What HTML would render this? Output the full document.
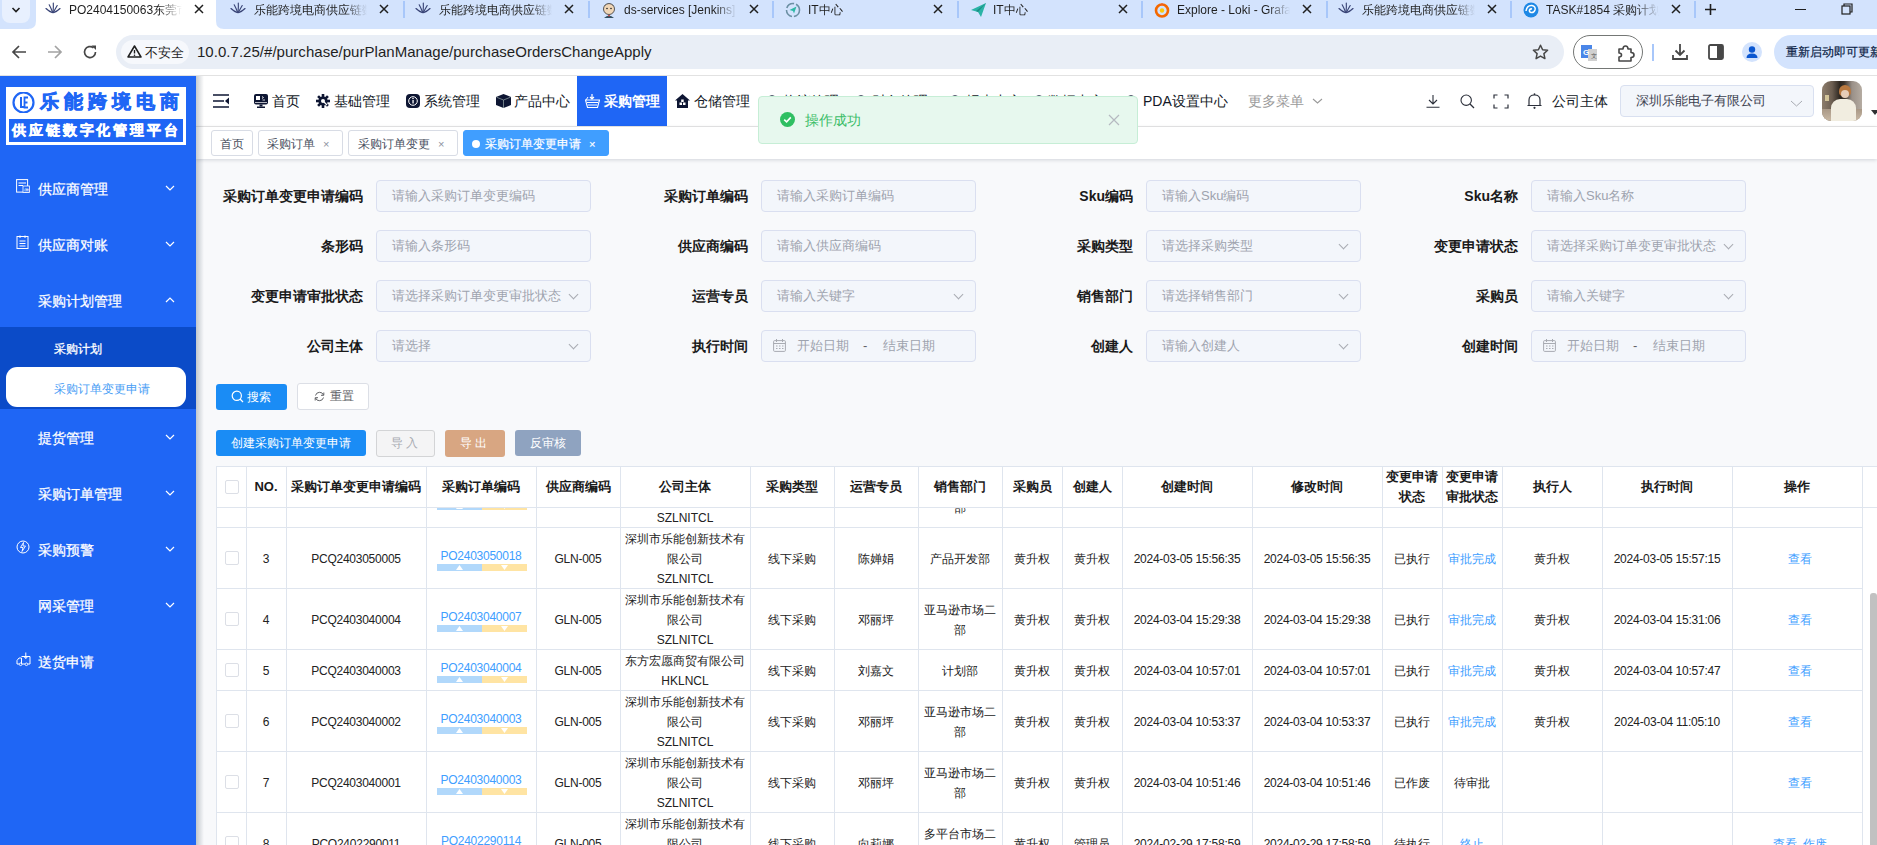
<!DOCTYPE html><html><head><meta charset="utf-8"><style>
*{box-sizing:border-box;margin:0;padding:0}
html,body{width:1877px;height:845px;overflow:hidden;background:#fff;font-family:"Liberation Sans",sans-serif;color:#303133}
.abs{position:absolute}
#tabs{position:absolute;left:0;top:0;width:1877px;height:29px;background:#d3e3fd}
.tab{position:absolute;top:0;height:29px;font-size:12px;color:#1f1f1f;white-space:nowrap}
.tab .t{position:absolute;top:3px;overflow:hidden;width:113px;height:16px;line-height:15px}
.tab .x{position:absolute;top:6px;font-size:14px;line-height:16px;color:#1f1f1f}
.sep{position:absolute;top:1px;width:2px;height:17px;background:#a8c7fa}
#toolbar{position:absolute;left:0;top:29px;width:1877px;height:47px;background:#fff;border-bottom:1px solid #e2e2e2}
#omni{position:absolute;left:116px;top:6px;width:1448px;height:34px;border-radius:17px;background:#e9eef6}
#page{position:absolute;left:0;top:76px;width:1877px;height:769px;background:#f8f9fb;overflow:hidden}
#side{position:absolute;left:0;top:0;width:196px;height:769px;background:#1f66f5;z-index:3}
#sideshadow{position:absolute;left:196px;top:0;width:8px;height:769px;background:linear-gradient(to right,rgba(0,21,41,.22),rgba(0,21,41,0));z-index:2}
.mi{position:absolute;left:0;width:196px;height:56px;color:#fff;font-size:14px;font-weight:bold}
.mi .l{position:absolute;left:38px;top:18px;line-height:20px}
.mi .ch{position:absolute;left:164px;top:24px;width:8px;height:8px;border-right:1.3px solid #fff;border-bottom:1.3px solid #fff;transform:rotate(45deg) scale(.75)}
#hdr{position:absolute;left:196px;top:0;width:1681px;height:51px;background:#fff;border-bottom:1px solid #e8e8e8}
.nav{position:absolute;top:0;height:50px;font-size:14px;color:#1b1b1b;line-height:50px;white-space:nowrap}
#tagsbar{position:absolute;left:196px;top:51px;width:1681px;height:32px;background:#fff;box-shadow:0 1px 4px rgba(0,21,41,.16)}
.tag{position:absolute;top:3px;height:26px;border:1px solid #d8dce5;border-radius:3px;font-size:12px;line-height:27px;color:#495060;background:#fff;white-space:nowrap}
.lbl{position:absolute;font-size:14px;font-weight:bold;color:#1a1a1a;text-align:right;line-height:32px;white-space:nowrap}
.inp{position:absolute;width:215px;height:32px;background:#f3f6fb;border:1px solid #dadff0;border-radius:4px;font-size:13px;color:#9ea3ae;line-height:30px;padding-left:15px;white-space:nowrap;overflow:hidden}
.inp .dd{position:absolute;right:13px;top:10px;width:7px;height:7px;border-right:1px solid #a8abb2;border-bottom:1px solid #a8abb2;transform:rotate(45deg)}
.btn{position:absolute;height:25px;border-radius:3px;font-size:12px;line-height:25px;text-align:center;white-space:nowrap}
#tbl{position:absolute;left:216px;top:390px;width:1647px;height:379px;overflow:hidden;background:#fff}
.hl{position:absolute;background:#e2e8f0}
.cell{position:absolute;text-align:center;font-size:12px;color:#222;line-height:20px;white-space:nowrap}
.hc{position:absolute;text-align:center;font-size:13px;font-weight:bold;color:#1a1a1a;line-height:20px;white-space:nowrap}
.lnk{color:#409eff}
.cb{position:absolute;width:14px;height:14px;border:1px solid #dcdfe6;border-radius:2px;background:#fff}
</style></head><body>
<div id="tabs">
<div class="abs" style="left:2px;top:0;width:28px;height:23px;background:#e8f0fe;border-radius:0 0 8px 8px"></div>
<svg class="abs" style="left:11px;top:6px" width="10" height="8" viewBox="0 0 10 8"><path d="M1.5 2 L5 5.5 L8.5 2" stroke="#1f1f1f" stroke-width="1.6" fill="none"/></svg>
<svg class="abs" style="left:28px;top:0" width="196" height="29" viewBox="0 0 196 29"><path d="M0 29 Q8 29 8 21 L8 0 L188 0 L188 21 Q188 29 196 29 Z" fill="#fff"/></svg>
<div class="tab" style="left:28px;width:185px">
<div class="abs" style="left:17px;top:2px;line-height:0"><svg width="16" height="12" viewBox="0 0 16 12"><g stroke="#3b4678" stroke-width="1.15" fill="none" stroke-linecap="round"><path d="M8 10.5 Q8.6 5 8.3 1"/><path d="M7.6 10.3 Q6 6 4.2 2.8"/><path d="M8.4 10.3 Q10.5 6.5 12.2 3.5"/><path d="M7.5 10.6 Q4 9.5 1 6.5"/><path d="M8.5 10.6 Q12 9.5 15 6.5"/></g></svg></div>
<div class="t" style="left:41px;-webkit-mask-image:linear-gradient(to right,#000 80%,transparent)">PO2404150063东莞市</div>
<svg class="abs" style="left:166px;top:4px" width="10" height="10" viewBox="0 0 10 10"><path d="M1 1 L9 9 M9 1 L1 9" stroke="#1f1f1f" stroke-width="1.5"/></svg>
</div>
<div class="tab" style="left:213px;width:185px">
<div class="abs" style="left:17px;top:2px;line-height:0"><svg width="16" height="12" viewBox="0 0 16 12"><g stroke="#3b4678" stroke-width="1.15" fill="none" stroke-linecap="round"><path d="M8 10.5 Q8.6 5 8.3 1"/><path d="M7.6 10.3 Q6 6 4.2 2.8"/><path d="M8.4 10.3 Q10.5 6.5 12.2 3.5"/><path d="M7.5 10.6 Q4 9.5 1 6.5"/><path d="M8.5 10.6 Q12 9.5 15 6.5"/></g></svg></div>
<div class="t" style="left:41px;-webkit-mask-image:linear-gradient(to right,#000 80%,transparent)">乐能跨境电商供应链数</div>
<svg class="abs" style="left:166px;top:4px" width="10" height="10" viewBox="0 0 10 10"><path d="M1 1 L9 9 M9 1 L1 9" stroke="#1f1f1f" stroke-width="1.5"/></svg>
</div>
<div class="tab" style="left:398px;width:185px">
<div class="abs" style="left:17px;top:2px;line-height:0"><svg width="16" height="12" viewBox="0 0 16 12"><g stroke="#3b4678" stroke-width="1.15" fill="none" stroke-linecap="round"><path d="M8 10.5 Q8.6 5 8.3 1"/><path d="M7.6 10.3 Q6 6 4.2 2.8"/><path d="M8.4 10.3 Q10.5 6.5 12.2 3.5"/><path d="M7.5 10.6 Q4 9.5 1 6.5"/><path d="M8.5 10.6 Q12 9.5 15 6.5"/></g></svg></div>
<div class="t" style="left:41px;-webkit-mask-image:linear-gradient(to right,#000 80%,transparent)">乐能跨境电商供应链数</div>
<svg class="abs" style="left:166px;top:4px" width="10" height="10" viewBox="0 0 10 10"><path d="M1 1 L9 9 M9 1 L1 9" stroke="#1f1f1f" stroke-width="1.5"/></svg>
</div>
<div class="tab" style="left:583px;width:185px">
<div class="abs" style="left:18px;top:2px;line-height:0"><svg width="16" height="16" viewBox="0 0 16 16"><circle cx="8" cy="7" r="5.5" fill="#f0d6b7" stroke="#333" stroke-width=".8"/><path d="M3 4 Q8 0 13 4 L12 3 Q8 1 4 3Z" fill="#333"/><circle cx="6" cy="6.5" r=".8" fill="#222"/><circle cx="10" cy="6.5" r=".8" fill="#222"/><path d="M3 16 Q8 11 13 16Z" fill="#335061"/><path d="M7 13 L9 13 L8 15Z" fill="#d33833"/></svg></div>
<div class="t" style="left:41px;-webkit-mask-image:linear-gradient(to right,#000 80%,transparent)">ds-services [Jenkins]</div>
<svg class="abs" style="left:166px;top:4px" width="10" height="10" viewBox="0 0 10 10"><path d="M1 1 L9 9 M9 1 L1 9" stroke="#1f1f1f" stroke-width="1.5"/></svg>
</div>
<div class="tab" style="left:767px;width:185px">
<div class="abs" style="left:18px;top:2px;line-height:0"><svg width="16" height="16" viewBox="0 0 16 16"><circle cx="8" cy="8" r="6.5" fill="none" stroke="#6b8fa3" stroke-width="1.6" stroke-dasharray="9 2"/><path d="M4.5 8 L11.5 4.5 L9 11.5 L8 9 Z" fill="#2eb8a6"/></svg></div>
<div class="t" style="left:41px;-webkit-mask-image:linear-gradient(to right,#000 80%,transparent)">IT中心</div>
<svg class="abs" style="left:166px;top:4px" width="10" height="10" viewBox="0 0 10 10"><path d="M1 1 L9 9 M9 1 L1 9" stroke="#1f1f1f" stroke-width="1.5"/></svg>
</div>
<div class="tab" style="left:952px;width:185px">
<div class="abs" style="left:18px;top:2px;line-height:0"><svg width="17" height="16" viewBox="0 0 17 16"><path d="M1 8 L16 1 L11 15 L8 10 Z" fill="#2ab3a6"/><path d="M8 10 L16 1 L6 9Z" fill="#1d8f85"/></svg></div>
<div class="t" style="left:41px;-webkit-mask-image:linear-gradient(to right,#000 80%,transparent)">IT中心</div>
<svg class="abs" style="left:166px;top:4px" width="10" height="10" viewBox="0 0 10 10"><path d="M1 1 L9 9 M9 1 L1 9" stroke="#1f1f1f" stroke-width="1.5"/></svg>
</div>
<div class="tab" style="left:1136px;width:185px">
<div class="abs" style="left:18px;top:2px;line-height:0"><svg width="16" height="16" viewBox="0 0 16 16"><circle cx="8" cy="8.5" r="6" fill="none" stroke="#f46800" stroke-width="2.6"/><circle cx="8" cy="8.5" r="2.2" fill="#fbca0a"/><path d="M8 1 L9.5 3 L6.5 3Z" fill="#f05a28"/></svg></div>
<div class="t" style="left:41px;-webkit-mask-image:linear-gradient(to right,#000 80%,transparent)">Explore - Loki - Grafana</div>
<svg class="abs" style="left:166px;top:4px" width="10" height="10" viewBox="0 0 10 10"><path d="M1 1 L9 9 M9 1 L1 9" stroke="#1f1f1f" stroke-width="1.5"/></svg>
</div>
<div class="tab" style="left:1321px;width:185px">
<div class="abs" style="left:17px;top:2px;line-height:0"><svg width="16" height="12" viewBox="0 0 16 12"><g stroke="#3b4678" stroke-width="1.15" fill="none" stroke-linecap="round"><path d="M8 10.5 Q8.6 5 8.3 1"/><path d="M7.6 10.3 Q6 6 4.2 2.8"/><path d="M8.4 10.3 Q10.5 6.5 12.2 3.5"/><path d="M7.5 10.6 Q4 9.5 1 6.5"/><path d="M8.5 10.6 Q12 9.5 15 6.5"/></g></svg></div>
<div class="t" style="left:41px;-webkit-mask-image:linear-gradient(to right,#000 80%,transparent)">乐能跨境电商供应链数</div>
<svg class="abs" style="left:166px;top:4px" width="10" height="10" viewBox="0 0 10 10"><path d="M1 1 L9 9 M9 1 L1 9" stroke="#1f1f1f" stroke-width="1.5"/></svg>
</div>
<div class="tab" style="left:1505px;width:185px">
<div class="abs" style="left:18px;top:2px;line-height:0"><svg width="16" height="16" viewBox="0 0 16 16"><circle cx="8" cy="8" r="7.5" fill="#1e88e5"/><path d="M3 9 Q4 3 9 3.5 Q13 4.5 12 8 Q11 11 8 10.5 Q6 10 6.5 8 Q7 6.5 9 7" stroke="#fff" stroke-width="1.5" fill="none"/></svg></div>
<div class="t" style="left:41px;-webkit-mask-image:linear-gradient(to right,#000 80%,transparent)">TASK#1854 采购计划</div>
<svg class="abs" style="left:166px;top:4px" width="10" height="10" viewBox="0 0 10 10"><path d="M1 1 L9 9 M9 1 L1 9" stroke="#1f1f1f" stroke-width="1.5"/></svg>
</div>
<div class="sep" style="left:403px"></div>
<div class="sep" style="left:588px"></div>
<div class="sep" style="left:772px"></div>
<div class="sep" style="left:957px"></div>
<div class="sep" style="left:1141px"></div>
<div class="sep" style="left:1326px"></div>
<div class="sep" style="left:1510px"></div>
<div class="sep" style="left:1694px"></div>
<svg class="abs" style="left:1704px;top:3px" width="13" height="13" viewBox="0 0 13 13"><path d="M6.5 1 V12 M1 6.5 H12" stroke="#1f1f1f" stroke-width="1.6"/></svg>
<div class="abs" style="left:1795px;top:9px;width:11px;height:1.2px;background:#1f1f1f"></div>
<svg class="abs" style="left:1841px;top:3px" width="12" height="12" viewBox="0 0 12 12"><rect x="1" y="3" width="8" height="8" fill="none" stroke="#1f1f1f" stroke-width="1.2"/><path d="M3 3 V1 H11 V9 H9" fill="none" stroke="#1f1f1f" stroke-width="1.2"/></svg>
</div>
<div id="toolbar">
<svg class="abs" style="left:11px;top:15px" width="16" height="16" viewBox="0 0 16 16"><path d="M15 8 H2 M8 2 L2 8 L8 14" stroke="#474747" stroke-width="1.7" fill="none"/></svg>
<svg class="abs" style="left:47px;top:15px" width="16" height="16" viewBox="0 0 16 16"><path d="M1 8 H14 M8 2 L14 8 L8 14" stroke="#a3a3a3" stroke-width="1.7" fill="none"/></svg>
<svg class="abs" style="left:82px;top:15px" width="16" height="16" viewBox="0 0 16 16"><path d="M13.5 8 A5.5 5.5 0 1 1 11.5 3.8" stroke="#474747" stroke-width="1.7" fill="none"/><path d="M9.5 1.5 H14 V6 Z" fill="#474747"/></svg>
<div id="omni">
<div class="abs" style="left:5px;top:5px;width:68px;height:24px;border-radius:12px;background:#f6f8fc"></div>
<svg class="abs" style="left:11px;top:10px" width="15" height="13" viewBox="0 0 15 13"><path d="M7.5 1 L14 12 H1 Z" fill="none" stroke="#1f1f1f" stroke-width="1.5" stroke-linejoin="round"/><path d="M7.5 5 V8.5" stroke="#1f1f1f" stroke-width="1.4"/><circle cx="7.5" cy="10.2" r=".8" fill="#1f1f1f"/></svg>
<div class="abs" style="left:29px;top:10px;font-size:13px;line-height:16px;color:#1f1f1f">不安全</div>
<div class="abs" style="left:81px;top:7px;font-size:15px;line-height:19px;color:#1f1f1f;letter-spacing:0.03px">10.0.7.25/#/purchase/purPlanManage/purchaseOrdersChangeApply</div>
<svg class="abs" style="left:1416px;top:9px" width="17" height="16" viewBox="0 0 17 16"><path d="M8.5 1.2 L10.6 5.8 L15.6 6.3 L11.9 9.6 L12.9 14.6 L8.5 12.1 L4.1 14.6 L5.1 9.6 L1.4 6.3 L6.4 5.8 Z" fill="none" stroke="#474747" stroke-width="1.5" stroke-linejoin="round"/></svg>
</div>
<div class="abs" style="left:1573px;top:6px;width:70px;height:34px;border:1px solid #747775;border-radius:17px"></div>
<svg class="abs" style="left:1581px;top:16px" width="17" height="17" viewBox="0 0 17 17"><rect x="0" y="0" width="11" height="13" fill="#4a86e8"/><rect x="7" y="4" width="9" height="12" fill="#d0d0d0"/><text x="2" y="10" font-size="8" fill="#fff" font-family="Liberation Sans" font-weight="bold">G</text><text x="10" y="13" font-size="6" fill="#555" font-family="Liberation Sans">文</text></svg>
<svg class="abs" style="left:1617px;top:16px" width="18" height="17" viewBox="0 0 18 17"><path d="M2 4 H6 Q6 1 8.5 1 Q11 1 11 4 H14 V7.5 Q17 7.5 17 10 Q17 12.5 14 12.5 V16 H2 V12 Q4.5 12 4.5 10 Q4.5 8 2 8 Z" fill="none" stroke="#474747" stroke-width="1.6" stroke-linejoin="round"/></svg>
<div class="abs" style="left:1652px;top:15px;width:2px;height:17px;background:#a8c7fa"></div>
<svg class="abs" style="left:1671px;top:14px" width="18" height="18" viewBox="0 0 18 18"><path d="M9 1 V12 M4.5 7.5 L9 12 L13.5 7.5 M2 12 V16 H16 V12" stroke="#474747" stroke-width="1.8" fill="none"/></svg>
<svg class="abs" style="left:1708px;top:15px" width="16" height="16" viewBox="0 0 16 16"><rect x="1" y="1" width="14" height="14" rx="1.5" fill="none" stroke="#474747" stroke-width="1.8"/><rect x="9" y="1" width="6" height="14" fill="#474747"/></svg>
<div class="abs" style="left:1742px;top:13px;width:20px;height:20px;border-radius:10px;background:#d3e3fd"></div>
<svg class="abs" style="left:1744px;top:15px" width="16" height="16" viewBox="0 0 16 16"><circle cx="8" cy="5.5" r="3.2" fill="#0b57d0"/><path d="M2.5 14 Q2.5 9.5 8 9.5 Q13.5 9.5 13.5 14 Z" fill="#0b57d0"/></svg>
<div class="abs" style="left:1774px;top:6px;width:120px;height:34px;border-radius:17px;background:#d3e3fd"></div>
<div class="abs" style="left:1786px;top:15.5px;font-size:12px;line-height:14px;color:#0b1d45;-webkit-text-stroke:.2px #0b1d45;white-space:nowrap">重新启动即可更新</div>
</div>
<div id="page">
<div id="side">
<div class="abs" style="left:6px;top:11px;width:180px;height:58px;background:#fff"></div>
<div class="abs" style="left:9px;top:42.5px;width:174px;height:23.5px;background:#1f66f5"></div>
<svg class="abs" style="left:12px;top:16px" width="24" height="21" viewBox="0 0 24 21"><circle cx="11.5" cy="10.5" r="10" fill="none" stroke="#1f66f5" stroke-width="2.2"/><path d="M9 5 V15 H12" stroke="#1f66f5" stroke-width="2" fill="none"/><path d="M16 5.5 H12.5 V15.5 H16 M12.5 10.5 H15.5" stroke="#1f66f5" stroke-width="1.8" fill="none"/></svg>
<div class="abs" style="left:40px;top:15px;font-size:19px;line-height:22px;font-weight:bold;color:#1f66f5;letter-spacing:5.1px;-webkit-text-stroke:.7px #1f66f5;white-space:nowrap">乐能跨境电商</div>
<div class="abs" style="left:12px;top:46px;font-size:14px;line-height:17px;font-weight:bold;color:#fff;letter-spacing:2.9px;-webkit-text-stroke:.5px #fff;white-space:nowrap">供应链数字化管理平台</div>
<div class="abs" style="left:38px;top:102.5px;font-size:14px;line-height:20px;color:#fff;-webkit-text-stroke:.25px #fff;white-space:nowrap">供应商管理</div>
<svg class="abs" style="left:165px;top:109px" width="10" height="6" viewBox="0 0 10 6"><path d="M1 1 L5 5 L9 1" stroke="#fff" stroke-width="1.2" fill="none"/></svg>
<div class="abs" style="left:16px;top:103px;line-height:0"><svg width="14" height="14" viewBox="0 0 14 14"><rect x=".6" y=".6" width="11" height="12.5" fill="none" stroke="#fff" stroke-width="1"/><path d="M2.5 4 H10 M2.5 6.5 H7" stroke="#fff" stroke-width="1"/><rect x="7" y="7" width="6.5" height="6.5" fill="#1f66f5" stroke="#fff" stroke-width=".8"/><text x="8" y="12.5" font-size="5" fill="#fff">供</text></svg></div>
<div class="abs" style="left:38px;top:158.5px;font-size:14px;line-height:20px;color:#fff;-webkit-text-stroke:.25px #fff;white-space:nowrap">供应商对账</div>
<svg class="abs" style="left:165px;top:165px" width="10" height="6" viewBox="0 0 10 6"><path d="M1 1 L5 5 L9 1" stroke="#fff" stroke-width="1.2" fill="none"/></svg>
<div class="abs" style="left:16px;top:159px;line-height:0"><svg width="14" height="14" viewBox="0 0 14 14"><rect x="1" y="1.5" width="11" height="12" fill="none" stroke="#fff" stroke-width="1"/><path d="M4 .5 V3 M9 .5 V3 M3.5 6 H9.5 M3.5 8.5 H9.5 M3.5 11 H9.5" stroke="#fff" stroke-width="1"/></svg></div>
<div class="abs" style="left:38px;top:214.5px;font-size:14px;line-height:20px;color:#fff;-webkit-text-stroke:.25px #fff;white-space:nowrap">采购计划管理</div>
<svg class="abs" style="left:165px;top:221px" width="10" height="6" viewBox="0 0 10 6"><path d="M1 5 L5 1 L9 5" stroke="#fff" stroke-width="1.2" fill="none"/></svg>
<div class="abs" style="left:38px;top:351.5px;font-size:14px;line-height:20px;color:#fff;-webkit-text-stroke:.25px #fff;white-space:nowrap">提货管理</div>
<svg class="abs" style="left:165px;top:358px" width="10" height="6" viewBox="0 0 10 6"><path d="M1 1 L5 5 L9 1" stroke="#fff" stroke-width="1.2" fill="none"/></svg>
<div class="abs" style="left:38px;top:407.5px;font-size:14px;line-height:20px;color:#fff;-webkit-text-stroke:.25px #fff;white-space:nowrap">采购订单管理</div>
<svg class="abs" style="left:165px;top:414px" width="10" height="6" viewBox="0 0 10 6"><path d="M1 1 L5 5 L9 1" stroke="#fff" stroke-width="1.2" fill="none"/></svg>
<div class="abs" style="left:38px;top:463.5px;font-size:14px;line-height:20px;color:#fff;-webkit-text-stroke:.25px #fff;white-space:nowrap">采购预警</div>
<svg class="abs" style="left:165px;top:470px" width="10" height="6" viewBox="0 0 10 6"><path d="M1 1 L5 5 L9 1" stroke="#fff" stroke-width="1.2" fill="none"/></svg>
<div class="abs" style="left:16px;top:464px;line-height:0"><svg width="14" height="14" viewBox="0 0 14 14"><circle cx="7" cy="7" r="6" fill="none" stroke="#fff" stroke-width="1"/><path d="M7.5 2.5 L4.5 7.5 H7 L6 11.5 L9.5 6 H7 Z" fill="none" stroke="#fff" stroke-width=".9"/></svg></div>
<div class="abs" style="left:38px;top:519.5px;font-size:14px;line-height:20px;color:#fff;-webkit-text-stroke:.25px #fff;white-space:nowrap">网采管理</div>
<svg class="abs" style="left:165px;top:526px" width="10" height="6" viewBox="0 0 10 6"><path d="M1 1 L5 5 L9 1" stroke="#fff" stroke-width="1.2" fill="none"/></svg>
<div class="abs" style="left:38px;top:575.5px;font-size:14px;line-height:20px;color:#fff;-webkit-text-stroke:.25px #fff;white-space:nowrap">送货申请</div>
<div class="abs" style="left:16px;top:576px;line-height:0"><svg width="15" height="15" viewBox="0 0 15 15"><path d="M5.5 4.5 H14 V12 H11.8 M9 12 H6 M3.2 12 H1 V8.5 L3 6 H5.5 V12" fill="none" stroke="#fff" stroke-width="1" stroke-linejoin="round"/><path d="M9.8 0.5 V6.5 M7.8 4.5 L9.8 6.5 L11.8 4.5" fill="none" stroke="#fff" stroke-width="1"/><circle cx="4.6" cy="12.3" r="1.3" fill="none" stroke="#fff" stroke-width=".9"/><circle cx="10.4" cy="12.3" r="1.3" fill="none" stroke="#fff" stroke-width=".9"/></svg></div>
<div class="abs" style="left:0;top:251px;width:196px;height:82px;background:#0b4bc8"></div>
<div class="abs" style="left:54px;top:263px;font-size:12px;line-height:20px;color:#fff;-webkit-text-stroke:.3px #fff;white-space:nowrap">采购计划</div>
<div class="abs" style="left:6px;top:291px;width:180px;height:40px;background:#fff;border-radius:11px"></div>
<div class="abs" style="left:54px;top:303px;font-size:12px;line-height:20px;color:#4a9ef5;white-space:nowrap">采购订单变更申请</div>
</div>
<div id="sideshadow"></div>
<div id="hdr">
<svg class="abs" style="left:17px;top:18px" width="16" height="14" viewBox="0 0 16 14"><path d="M0 1 H16 M0 7 H11 M0 13 H16" stroke="#0e1633" stroke-width="1.6"/><path d="M16 3.5 L12 7 L16 10.5Z" fill="#0e1633"/></svg>
<div class="abs" style="left:381px;top:0;width:90px;height:50px;background:#1f66f5"></div>
<div class="abs" style="left:58px;top:18px;line-height:0"><svg width="14" height="14" viewBox="0 0 14 14"><rect x="0" y="0" width="14" height="10.5" rx="2" fill="#0e1633"/><rect x="2" y="2" width="4" height="4" fill="#fff"/><path d="M8 2.5 L9.5 3.5 L8 4.5 M8.5 6 H11" stroke="#fff" stroke-width=".8" fill="none"/><path d="M1 8.5 H13" stroke="#fff" stroke-width=".7"/><rect x="5.5" y="10.5" width="3" height="2" fill="#0e1633"/><rect x="3" y="12.5" width="8" height="1.5" fill="#0e1633"/></svg></div>
<div class="abs" style="left:76px;top:16px;font-size:14px;line-height:18px;color:#121826;white-space:nowrap;">首页</div>
<div class="abs" style="left:120px;top:18px;line-height:0"><svg width="14" height="14" viewBox="0 0 14 14"><g fill="#0e1633"><circle cx="7" cy="7" r="4.6"/><rect x="5.7" y="0" width="2.6" height="14"/><rect x="0" y="5.7" width="14" height="2.6"/><rect x="5.7" y="0" width="2.6" height="14" transform="rotate(45 7 7)"/><rect x="5.7" y="0" width="2.6" height="14" transform="rotate(-45 7 7)"/></g><circle cx="7" cy="7" r="2" fill="#fff"/><path d="M8 8 L11 11" stroke="#fff" stroke-width="1.2"/></svg></div>
<div class="abs" style="left:138px;top:16px;font-size:14px;line-height:18px;color:#121826;white-space:nowrap;">基础管理</div>
<div class="abs" style="left:210px;top:18px;line-height:0"><svg width="14" height="14" viewBox="0 0 14 14"><rect x="0" y="0" width="14" height="14" rx="4" fill="#0e1633"/><circle cx="7" cy="7" r="4.3" fill="none" stroke="#fff" stroke-width="1"/><rect x="6.4" y="6" width="1.3" height="3.5" fill="#fff"/><circle cx="7" cy="4.5" r=".8" fill="#fff"/></svg></div>
<div class="abs" style="left:228px;top:16px;font-size:14px;line-height:18px;color:#121826;white-space:nowrap;">系统管理</div>
<div class="abs" style="left:300px;top:18px;line-height:0"><svg width="15" height="14" viewBox="0 0 15 14"><path d="M7.5 0 L15 3 L15 11 L7.5 14 L0 11 L0 3Z" fill="#0e1633"/><path d="M0.5 3.2 L7.5 6 L14.5 3.2 M7.5 6 V14" stroke="#9aa" stroke-width=".7" fill="none"/></svg></div>
<div class="abs" style="left:318px;top:16px;font-size:14px;line-height:18px;color:#121826;white-space:nowrap;">产品中心</div>
<div class="abs" style="left:479px;top:18px;line-height:0"><svg width="15" height="14" viewBox="0 0 15 14"><path d="M7.5 0 L15 6.5 L13 6.5 L13 14 L2 14 L2 6.5 L0 6.5Z" fill="#0e1633"/><rect x="4.5" y="8.5" width="2.5" height="2.5" fill="#fff"/><rect x="8" y="8.5" width="2.5" height="2.5" fill="#fff"/><rect x="6.2" y="5.5" width="2.5" height="2.5" fill="#fff"/></svg></div>
<div class="abs" style="left:498px;top:16px;font-size:14px;line-height:18px;color:#121826;white-space:nowrap;">仓储管理</div>
<div class="abs" style="left:570px;top:18px;line-height:0"><svg width="12" height="14" viewBox="0 0 12 14"><circle cx="6" cy="7" r="5" fill="none" stroke="#0e1633" stroke-width="1.3"/></svg></div>
<div class="abs" style="left:587px;top:16px;font-size:14px;line-height:18px;color:#121826;white-space:nowrap;">物流管理</div>
<div class="abs" style="left:659px;top:18px;line-height:0"><svg width="12" height="14" viewBox="0 0 12 14"><circle cx="6" cy="7" r="5" fill="none" stroke="#0e1633" stroke-width="1.3"/></svg></div>
<div class="abs" style="left:676px;top:16px;font-size:14px;line-height:18px;color:#121826;white-space:nowrap;">财务管理</div>
<div class="abs" style="left:753px;top:18px;line-height:0"><svg width="12" height="14" viewBox="0 0 12 14"><circle cx="6" cy="7" r="5" fill="none" stroke="#0e1633" stroke-width="1.3"/></svg></div>
<div class="abs" style="left:770px;top:16px;font-size:14px;line-height:18px;color:#121826;white-space:nowrap;">报表中心</div>
<div class="abs" style="left:837px;top:18px;line-height:0"><svg width="12" height="14" viewBox="0 0 12 14"><circle cx="6" cy="7" r="5" fill="none" stroke="#0e1633" stroke-width="1.3"/></svg></div>
<div class="abs" style="left:852px;top:16px;font-size:14px;line-height:18px;color:#121826;white-space:nowrap;">数据中心</div>
<div class="abs" style="left:929px;top:18px;line-height:0"><svg width="12" height="14" viewBox="0 0 12 14"><circle cx="6" cy="7" r="5" fill="none" stroke="#0e1633" stroke-width="1.3"/></svg></div>
<div class="abs" style="left:947px;top:16px;font-size:14px;line-height:18px;color:#121826;white-space:nowrap;">PDA设置中心</div>
<div class="abs" style="left:389px;top:18px;line-height:0"><svg width="15" height="14" viewBox="0 0 15 14"><path d="M7 0 V5 M5 3 L7 5 L9 3" stroke="#fff" stroke-width="1.2" fill="none"/><path d="M0.5 6 L14.5 6 L12.5 13.5 H2.5Z" fill="none" stroke="#fff" stroke-width="1.1"/><path d="M2 8.5 H13 M2.8 11 H12.2" stroke="#fff" stroke-width="1"/><path d="M1 6 L3 3" stroke="#fff" stroke-width="1"/></svg></div>
<div class="abs" style="left:408px;top:16px;font-size:14px;line-height:18px;color:#fff;font-weight:bold;white-space:nowrap;">采购管理</div>
<div class="abs" style="left:1052px;top:16px;font-size:14px;line-height:18px;color:#9a9a9a;white-space:nowrap;">更多菜单</div>
<svg class="abs" style="left:1116px;top:22px" width="11" height="6" viewBox="0 0 11 6"><path d="M1 1 L5.5 5 L10 1" stroke="#9a9a9a" stroke-width="1.1" fill="none"/></svg>
<svg class="abs" style="left:1230px;top:19px" width="14" height="13" viewBox="0 0 14 13"><path d="M7 0 V9 M3 5 L7 9 L11 5 M0.5 12.3 H13.5" stroke="#2b2f3a" stroke-width="1.1" fill="none"/></svg>
<svg class="abs" style="left:1264px;top:18px" width="15" height="15" viewBox="0 0 15 15"><circle cx="6.2" cy="6.2" r="5.2" stroke="#2b2f3a" stroke-width="1.1" fill="none"/><path d="M10 10 L14 14" stroke="#2b2f3a" stroke-width="1.2"/></svg>
<svg class="abs" style="left:1297px;top:18px" width="16" height="15" viewBox="0 0 16 15"><path d="M1 4.5 V1 H4.5 M11.5 1 H15 V4.5 M15 10.5 V14 H11.5 M4.5 14 H1 V10.5" stroke="#2b2f3a" stroke-width="1.2" fill="none"/></svg>
<svg class="abs" style="left:1331px;top:17px" width="15" height="16" viewBox="0 0 15 16"><path d="M2 12.5 V7 Q2 2 7.5 2 Q13 2 13 7 V12.5 M0.5 12.5 H14.5" stroke="#2b2f3a" stroke-width="1.2" fill="none"/><circle cx="7.5" cy="1.2" r=".9" fill="#2b2f3a"/><circle cx="7.5" cy="14.8" r="1.1" fill="#2b2f3a"/></svg>
<div class="abs" style="left:1356px;top:16px;font-size:14px;line-height:18px;color:#121826;white-space:nowrap;">公司主体</div>
<div class="abs" style="left:1424px;top:9px;width:194px;height:32px;background:#f3f6fb;border:1px solid #d9e0f0;border-radius:4px"></div>
<div class="abs" style="left:1440px;top:16px;font-size:13px;line-height:17px;color:#3c4150;white-space:nowrap;">深圳乐能电子有限公司</div>
<svg class="abs" style="left:1594px;top:24px" width="13" height="7" viewBox="0 0 13 7"><path d="M1 1 L6.5 6 L12 1" stroke="#a8abb2" stroke-width="1" fill="none"/></svg>
<div class="abs" style="left:1626px;top:5px;width:40px;height:40px;border-radius:9px;overflow:hidden;background:linear-gradient(90deg,#8d7d6c 0%,#6d5f52 25%,#2c2620 45%,#3a322a 55%,#9a9088 75%,#b5aca2 100%)">
<div class="abs" style="left:0;top:28px;width:40px;height:12px;background:linear-gradient(180deg,#a99886,#c9b9a5)"></div>
<div class="abs" style="left:3px;top:14px;width:4px;height:6px;background:#e8d9a8;opacity:.8"></div>
<div class="abs" style="left:17px;top:4px;width:12px;height:11px;border-radius:6px 6px 4px 4px;background:#b8783f"></div>
<div class="abs" style="left:19px;top:9px;width:8px;height:8px;border-radius:4px;background:#e6cdb8"></div>
<div class="abs" style="left:9px;top:18px;width:25px;height:26px;border-radius:9px 9px 0 0;background:#f1ede0"></div></div>
<svg class="abs" style="left:1675px;top:34px" width="8" height="6" viewBox="0 0 8 6"><path d="M0 0 H8 L4 5Z" fill="#303133"/></svg>
</div>
<div id="tagsbar">
<div class="tag" style="left:15px;width:42px;padding-left:8px">首页</div>
<div class="tag" style="left:62px;width:85px;padding-left:8px">采购订单<span class="abs" style="left:64px;top:0;font-size:11px;color:#8c93a0">×</span></div>
<div class="tag" style="left:152px;width:110px;padding-left:9px">采购订单变更<span class="abs" style="left:89px;top:0;font-size:11px;color:#8c93a0">×</span></div>
<div class="tag" style="left:267px;width:146px;background:#409eff;border-color:#409eff;color:#fff;padding-left:21px;-webkit-text-stroke:.2px #fff">采购订单变更申请<span class="abs" style="left:125px;top:0;font-size:11px;color:#fff">×</span><span class="abs" style="left:8px;top:9px;width:8px;height:8px;border-radius:4px;background:#fff"></span></div>
</div>
<div class="lbl" style="left:163px;width:200px;top:104px">采购订单变更申请编码</div>
<div class="inp" style="left:376px;top:104px">请输入采购订单变更编码</div>
<div class="lbl" style="left:548px;width:200px;top:104px">采购订单编码</div>
<div class="inp" style="left:761px;top:104px">请输入采购订单编码</div>
<div class="lbl" style="left:933px;width:200px;top:104px">Sku编码</div>
<div class="inp" style="left:1146px;top:104px">请输入Sku编码</div>
<div class="lbl" style="left:1318px;width:200px;top:104px">Sku名称</div>
<div class="inp" style="left:1531px;top:104px">请输入Sku名称</div>
<div class="lbl" style="left:163px;width:200px;top:154px">条形码</div>
<div class="inp" style="left:376px;top:154px">请输入条形码</div>
<div class="lbl" style="left:548px;width:200px;top:154px">供应商编码</div>
<div class="inp" style="left:761px;top:154px">请输入供应商编码</div>
<div class="lbl" style="left:933px;width:200px;top:154px">采购类型</div>
<div class="inp" style="left:1146px;top:154px">请选择采购类型<span class="dd"></span></div>
<div class="lbl" style="left:1318px;width:200px;top:154px">变更申请状态</div>
<div class="inp" style="left:1531px;top:154px">请选择采购订单变更审批状态<span class="dd"></span></div>
<div class="lbl" style="left:163px;width:200px;top:204px">变更申请审批状态</div>
<div class="inp" style="left:376px;top:204px">请选择采购订单变更审批状态<span class="dd"></span></div>
<div class="lbl" style="left:548px;width:200px;top:204px">运营专员</div>
<div class="inp" style="left:761px;top:204px">请输入关键字<span class="dd"></span></div>
<div class="lbl" style="left:933px;width:200px;top:204px">销售部门</div>
<div class="inp" style="left:1146px;top:204px">请选择销售部门<span class="dd"></span></div>
<div class="lbl" style="left:1318px;width:200px;top:204px">采购员</div>
<div class="inp" style="left:1531px;top:204px">请输入关键字<span class="dd"></span></div>
<div class="lbl" style="left:163px;width:200px;top:254px">公司主体</div>
<div class="inp" style="left:376px;top:254px">请选择<span class="dd"></span></div>
<div class="lbl" style="left:548px;width:200px;top:254px">执行时间</div>
<div class="inp" style="left:761px;top:254px;padding-left:0"><span class="abs" style="left:11px;top:8px;line-height:0"><svg width="13" height="13" viewBox="0 0 13 13"><rect x=".6" y="1.6" width="11.8" height="10.8" rx="1" fill="none" stroke="#a8abb2" stroke-width="1"/><path d="M.6 4.5 H12.4 M3.5 0 V3 M9.5 0 V3" stroke="#a8abb2" stroke-width="1"/><path d="M3 7 H4.5 M6 7 H7.5 M9 7 H10.5 M3 9.5 H4.5 M6 9.5 H7.5 M9 9.5 H10.5" stroke="#a8abb2" stroke-width="1"/></svg></span><span class="abs" style="left:35px;top:0">开始日期</span><span class="abs" style="left:101px;top:0;color:#606266">-</span><span class="abs" style="left:121px;top:0">结束日期</span></div>
<div class="lbl" style="left:933px;width:200px;top:254px">创建人</div>
<div class="inp" style="left:1146px;top:254px">请输入创建人<span class="dd"></span></div>
<div class="lbl" style="left:1318px;width:200px;top:254px">创建时间</div>
<div class="inp" style="left:1531px;top:254px;padding-left:0"><span class="abs" style="left:11px;top:8px;line-height:0"><svg width="13" height="13" viewBox="0 0 13 13"><rect x=".6" y="1.6" width="11.8" height="10.8" rx="1" fill="none" stroke="#a8abb2" stroke-width="1"/><path d="M.6 4.5 H12.4 M3.5 0 V3 M9.5 0 V3" stroke="#a8abb2" stroke-width="1"/><path d="M3 7 H4.5 M6 7 H7.5 M9 7 H10.5 M3 9.5 H4.5 M6 9.5 H7.5 M9 9.5 H10.5" stroke="#a8abb2" stroke-width="1"/></svg></span><span class="abs" style="left:35px;top:0">开始日期</span><span class="abs" style="left:101px;top:0;color:#606266">-</span><span class="abs" style="left:121px;top:0">结束日期</span></div>
<div class="btn" style="left:216px;top:308px;width:71px;height:26px;background:#1a8cf5;color:#fff;line-height:26px;padding-left:14px">搜索</div>
<svg class="abs" style="left:231px;top:314px" width="13" height="13" viewBox="0 0 13 13"><circle cx="5.8" cy="5.8" r="4.6" fill="none" stroke="#fff" stroke-width="1.2"/><path d="M9 9 L12 12" stroke="#fff" stroke-width="1.2"/></svg>
<div class="btn" style="left:297px;top:307px;width:72px;height:27px;background:#fff;border:1px solid #dcdfe6;color:#606266;line-height:25px;padding-left:17px">重置</div>
<svg class="abs" style="left:314px;top:315px" width="11" height="11" viewBox="0 0 11 11"><path d="M9.5 4 A4.2 4.2 0 0 0 1.5 4.5 M1.5 7 A4.2 4.2 0 0 0 9.5 6.5" fill="none" stroke="#606266" stroke-width="1"/><path d="M9.8 1.5 V4.3 H7" fill="none" stroke="#606266" stroke-width="1"/><path d="M1.2 9.5 V6.7 H4" fill="none" stroke="#606266" stroke-width="1"/></svg>
<div class="btn" style="left:216px;top:354px;width:150px;height:26px;line-height:26px;background:#1a8cf5;color:#fff">创建采购订单变更申请</div>
<div class="btn" style="left:376px;top:354px;width:59px;height:27px;line-height:25px;background:#f4f4f5;border:1px solid #d3d4d6;color:#a8abb2;letter-spacing:3px">导入</div>
<div class="btn" style="left:445px;top:354px;width:60px;height:27px;line-height:27px;background:#d8a682;color:#fff;letter-spacing:3px">导出</div>
<div class="btn" style="left:515px;top:354px;width:66px;height:26px;line-height:26px;background:#8fa3c0;color:#fff">反审核</div>
<div class="abs" style="left:216px;top:390px;width:1661px;height:379px;background:#fff;overflow:hidden">
<div class="cb" style="left:9px;top:23.5px"></div>
<div class="cell" style="left:30px;width:40px;top:21.5px;color:#222;letter-spacing:-0.25px;">2</div>
<div class="cell" style="left:70px;width:140px;top:21.5px;color:#222;letter-spacing:-0.25px;">PCQ2403050006</div>
<div class="cell" style="left:210px;width:110px;top:18.5px;color:#409eff;letter-spacing:-0.25px;">PO2403050019</div>
<div class="abs" style="left:221px;top:36.5px;width:45px;height:7px;background:#b1d8fb"></div>
<div class="abs" style="left:266px;top:36.5px;width:45px;height:7px;background:#ffe4a3"></div>
<svg class="abs" style="left:240px;top:37.5px" width="7" height="5" viewBox="0 0 7 5"><path d="M3.5 0 L7 5 H0Z" fill="#fff"/></svg>
<svg class="abs" style="left:285px;top:37.5px" width="7" height="5" viewBox="0 0 7 5"><path d="M0 0 H7 L3.5 5Z" fill="#fff"/></svg>
<div class="cell" style="left:320px;width:84px;top:21.5px;color:#222;letter-spacing:-0.25px;">GLN-005</div>
<div class="cell" style="left:404px;width:130px;top:1.5px;color:#222;">深圳市乐能创新技术有<br>限公司<br>SZLNITCL</div>
<div class="cell" style="left:534px;width:84px;top:21.5px;color:#222;">线下采购</div>
<div class="cell" style="left:618px;width:84px;top:21.5px;color:#222;">邓丽坪</div>
<div class="cell" style="left:702px;width:84px;top:11.5px;color:#222;">亚马逊市场二<br>部</div>
<div class="cell" style="left:786px;width:60px;top:21.5px;color:#222;">黄升权</div>
<div class="cell" style="left:846px;width:60px;top:21.5px;color:#222;">黄升权</div>
<div class="cell" style="left:906px;width:130px;top:21.5px;color:#222;letter-spacing:-0.25px;">2024-03-05 16:10:22</div>
<div class="cell" style="left:1036px;width:130px;top:21.5px;color:#222;letter-spacing:-0.25px;">2024-03-05 16:10:22</div>
<div class="cell" style="left:1166px;width:60px;top:21.5px;color:#222;">已执行</div>
<div class="cell" style="left:1226px;width:60px;top:21.5px;color:#409eff;">审批完成</div>
<div class="cell" style="left:1286px;width:100px;top:21.5px;color:#222;">黄升权</div>
<div class="cell" style="left:1386px;width:130px;top:21.5px;color:#222;letter-spacing:-0.25px;">2024-03-05 16:11:02</div>
<div class="cell" style="left:1519px;width:130px;top:21.5px;color:#409eff;">查看</div>
<div class="hl" style="left:0;top:61px;width:1647px;height:1px;background:#dfe5ee"></div>
<div class="cb" style="left:9px;top:84.5px"></div>
<div class="cell" style="left:30px;width:40px;top:82.5px;color:#222;letter-spacing:-0.25px;">3</div>
<div class="cell" style="left:70px;width:140px;top:82.5px;color:#222;letter-spacing:-0.25px;">PCQ2403050005</div>
<div class="cell" style="left:210px;width:110px;top:79.5px;color:#409eff;letter-spacing:-0.25px;">PO2403050018</div>
<div class="abs" style="left:221px;top:97.5px;width:45px;height:7px;background:#b1d8fb"></div>
<div class="abs" style="left:266px;top:97.5px;width:45px;height:7px;background:#ffe4a3"></div>
<svg class="abs" style="left:240px;top:98.5px" width="7" height="5" viewBox="0 0 7 5"><path d="M3.5 0 L7 5 H0Z" fill="#fff"/></svg>
<svg class="abs" style="left:285px;top:98.5px" width="7" height="5" viewBox="0 0 7 5"><path d="M0 0 H7 L3.5 5Z" fill="#fff"/></svg>
<div class="cell" style="left:320px;width:84px;top:82.5px;color:#222;letter-spacing:-0.25px;">GLN-005</div>
<div class="cell" style="left:404px;width:130px;top:62.5px;color:#222;">深圳市乐能创新技术有<br>限公司<br>SZLNITCL</div>
<div class="cell" style="left:534px;width:84px;top:82.5px;color:#222;">线下采购</div>
<div class="cell" style="left:618px;width:84px;top:82.5px;color:#222;">陈婵娟</div>
<div class="cell" style="left:702px;width:84px;top:82.5px;color:#222;">产品开发部</div>
<div class="cell" style="left:786px;width:60px;top:82.5px;color:#222;">黄升权</div>
<div class="cell" style="left:846px;width:60px;top:82.5px;color:#222;">黄升权</div>
<div class="cell" style="left:906px;width:130px;top:82.5px;color:#222;letter-spacing:-0.25px;">2024-03-05 15:56:35</div>
<div class="cell" style="left:1036px;width:130px;top:82.5px;color:#222;letter-spacing:-0.25px;">2024-03-05 15:56:35</div>
<div class="cell" style="left:1166px;width:60px;top:82.5px;color:#222;">已执行</div>
<div class="cell" style="left:1226px;width:60px;top:82.5px;color:#409eff;">审批完成</div>
<div class="cell" style="left:1286px;width:100px;top:82.5px;color:#222;">黄升权</div>
<div class="cell" style="left:1386px;width:130px;top:82.5px;color:#222;letter-spacing:-0.25px;">2024-03-05 15:57:15</div>
<div class="cell" style="left:1519px;width:130px;top:82.5px;color:#409eff;">查看</div>
<div class="hl" style="left:0;top:122px;width:1647px;height:1px;background:#dfe5ee"></div>
<div class="cb" style="left:9px;top:145.5px"></div>
<div class="cell" style="left:30px;width:40px;top:143.5px;color:#222;letter-spacing:-0.25px;">4</div>
<div class="cell" style="left:70px;width:140px;top:143.5px;color:#222;letter-spacing:-0.25px;">PCQ2403040004</div>
<div class="cell" style="left:210px;width:110px;top:140.5px;color:#409eff;letter-spacing:-0.25px;">PO2403040007</div>
<div class="abs" style="left:221px;top:158.5px;width:45px;height:7px;background:#b1d8fb"></div>
<div class="abs" style="left:266px;top:158.5px;width:45px;height:7px;background:#ffe4a3"></div>
<svg class="abs" style="left:240px;top:159.5px" width="7" height="5" viewBox="0 0 7 5"><path d="M3.5 0 L7 5 H0Z" fill="#fff"/></svg>
<svg class="abs" style="left:285px;top:159.5px" width="7" height="5" viewBox="0 0 7 5"><path d="M0 0 H7 L3.5 5Z" fill="#fff"/></svg>
<div class="cell" style="left:320px;width:84px;top:143.5px;color:#222;letter-spacing:-0.25px;">GLN-005</div>
<div class="cell" style="left:404px;width:130px;top:123.5px;color:#222;">深圳市乐能创新技术有<br>限公司<br>SZLNITCL</div>
<div class="cell" style="left:534px;width:84px;top:143.5px;color:#222;">线下采购</div>
<div class="cell" style="left:618px;width:84px;top:143.5px;color:#222;">邓丽坪</div>
<div class="cell" style="left:702px;width:84px;top:133.5px;color:#222;">亚马逊市场二<br>部</div>
<div class="cell" style="left:786px;width:60px;top:143.5px;color:#222;">黄升权</div>
<div class="cell" style="left:846px;width:60px;top:143.5px;color:#222;">黄升权</div>
<div class="cell" style="left:906px;width:130px;top:143.5px;color:#222;letter-spacing:-0.25px;">2024-03-04 15:29:38</div>
<div class="cell" style="left:1036px;width:130px;top:143.5px;color:#222;letter-spacing:-0.25px;">2024-03-04 15:29:38</div>
<div class="cell" style="left:1166px;width:60px;top:143.5px;color:#222;">已执行</div>
<div class="cell" style="left:1226px;width:60px;top:143.5px;color:#409eff;">审批完成</div>
<div class="cell" style="left:1286px;width:100px;top:143.5px;color:#222;">黄升权</div>
<div class="cell" style="left:1386px;width:130px;top:143.5px;color:#222;letter-spacing:-0.25px;">2024-03-04 15:31:06</div>
<div class="cell" style="left:1519px;width:130px;top:143.5px;color:#409eff;">查看</div>
<div class="hl" style="left:0;top:183px;width:1647px;height:1px;background:#dfe5ee"></div>
<div class="cb" style="left:9px;top:196.5px"></div>
<div class="cell" style="left:30px;width:40px;top:194.5px;color:#222;letter-spacing:-0.25px;">5</div>
<div class="cell" style="left:70px;width:140px;top:194.5px;color:#222;letter-spacing:-0.25px;">PCQ2403040003</div>
<div class="cell" style="left:210px;width:110px;top:191.5px;color:#409eff;letter-spacing:-0.25px;">PO2403040004</div>
<div class="abs" style="left:221px;top:209.5px;width:45px;height:7px;background:#b1d8fb"></div>
<div class="abs" style="left:266px;top:209.5px;width:45px;height:7px;background:#ffe4a3"></div>
<svg class="abs" style="left:240px;top:210.5px" width="7" height="5" viewBox="0 0 7 5"><path d="M3.5 0 L7 5 H0Z" fill="#fff"/></svg>
<svg class="abs" style="left:285px;top:210.5px" width="7" height="5" viewBox="0 0 7 5"><path d="M0 0 H7 L3.5 5Z" fill="#fff"/></svg>
<div class="cell" style="left:320px;width:84px;top:194.5px;color:#222;letter-spacing:-0.25px;">GLN-005</div>
<div class="cell" style="left:404px;width:130px;top:184.5px;color:#222;">东方宏愿商贸有限公司<br>HKLNCL</div>
<div class="cell" style="left:534px;width:84px;top:194.5px;color:#222;">线下采购</div>
<div class="cell" style="left:618px;width:84px;top:194.5px;color:#222;">刘嘉文</div>
<div class="cell" style="left:702px;width:84px;top:194.5px;color:#222;">计划部</div>
<div class="cell" style="left:786px;width:60px;top:194.5px;color:#222;">黄升权</div>
<div class="cell" style="left:846px;width:60px;top:194.5px;color:#222;">黄升权</div>
<div class="cell" style="left:906px;width:130px;top:194.5px;color:#222;letter-spacing:-0.25px;">2024-03-04 10:57:01</div>
<div class="cell" style="left:1036px;width:130px;top:194.5px;color:#222;letter-spacing:-0.25px;">2024-03-04 10:57:01</div>
<div class="cell" style="left:1166px;width:60px;top:194.5px;color:#222;">已执行</div>
<div class="cell" style="left:1226px;width:60px;top:194.5px;color:#409eff;">审批完成</div>
<div class="cell" style="left:1286px;width:100px;top:194.5px;color:#222;">黄升权</div>
<div class="cell" style="left:1386px;width:130px;top:194.5px;color:#222;letter-spacing:-0.25px;">2024-03-04 10:57:47</div>
<div class="cell" style="left:1519px;width:130px;top:194.5px;color:#409eff;">查看</div>
<div class="hl" style="left:0;top:224px;width:1647px;height:1px;background:#dfe5ee"></div>
<div class="cb" style="left:9px;top:247.5px"></div>
<div class="cell" style="left:30px;width:40px;top:245.5px;color:#222;letter-spacing:-0.25px;">6</div>
<div class="cell" style="left:70px;width:140px;top:245.5px;color:#222;letter-spacing:-0.25px;">PCQ2403040002</div>
<div class="cell" style="left:210px;width:110px;top:242.5px;color:#409eff;letter-spacing:-0.25px;">PO2403040003</div>
<div class="abs" style="left:221px;top:260.5px;width:45px;height:7px;background:#b1d8fb"></div>
<div class="abs" style="left:266px;top:260.5px;width:45px;height:7px;background:#ffe4a3"></div>
<svg class="abs" style="left:240px;top:261.5px" width="7" height="5" viewBox="0 0 7 5"><path d="M3.5 0 L7 5 H0Z" fill="#fff"/></svg>
<svg class="abs" style="left:285px;top:261.5px" width="7" height="5" viewBox="0 0 7 5"><path d="M0 0 H7 L3.5 5Z" fill="#fff"/></svg>
<div class="cell" style="left:320px;width:84px;top:245.5px;color:#222;letter-spacing:-0.25px;">GLN-005</div>
<div class="cell" style="left:404px;width:130px;top:225.5px;color:#222;">深圳市乐能创新技术有<br>限公司<br>SZLNITCL</div>
<div class="cell" style="left:534px;width:84px;top:245.5px;color:#222;">线下采购</div>
<div class="cell" style="left:618px;width:84px;top:245.5px;color:#222;">邓丽坪</div>
<div class="cell" style="left:702px;width:84px;top:235.5px;color:#222;">亚马逊市场二<br>部</div>
<div class="cell" style="left:786px;width:60px;top:245.5px;color:#222;">黄升权</div>
<div class="cell" style="left:846px;width:60px;top:245.5px;color:#222;">黄升权</div>
<div class="cell" style="left:906px;width:130px;top:245.5px;color:#222;letter-spacing:-0.25px;">2024-03-04 10:53:37</div>
<div class="cell" style="left:1036px;width:130px;top:245.5px;color:#222;letter-spacing:-0.25px;">2024-03-04 10:53:37</div>
<div class="cell" style="left:1166px;width:60px;top:245.5px;color:#222;">已执行</div>
<div class="cell" style="left:1226px;width:60px;top:245.5px;color:#409eff;">审批完成</div>
<div class="cell" style="left:1286px;width:100px;top:245.5px;color:#222;">黄升权</div>
<div class="cell" style="left:1386px;width:130px;top:245.5px;color:#222;letter-spacing:-0.25px;">2024-03-04 11:05:10</div>
<div class="cell" style="left:1519px;width:130px;top:245.5px;color:#409eff;">查看</div>
<div class="hl" style="left:0;top:285px;width:1647px;height:1px;background:#dfe5ee"></div>
<div class="cb" style="left:9px;top:308.5px"></div>
<div class="cell" style="left:30px;width:40px;top:306.5px;color:#222;letter-spacing:-0.25px;">7</div>
<div class="cell" style="left:70px;width:140px;top:306.5px;color:#222;letter-spacing:-0.25px;">PCQ2403040001</div>
<div class="cell" style="left:210px;width:110px;top:303.5px;color:#409eff;letter-spacing:-0.25px;">PO2403040003</div>
<div class="abs" style="left:221px;top:321.5px;width:45px;height:7px;background:#b1d8fb"></div>
<div class="abs" style="left:266px;top:321.5px;width:45px;height:7px;background:#ffe4a3"></div>
<svg class="abs" style="left:240px;top:322.5px" width="7" height="5" viewBox="0 0 7 5"><path d="M3.5 0 L7 5 H0Z" fill="#fff"/></svg>
<svg class="abs" style="left:285px;top:322.5px" width="7" height="5" viewBox="0 0 7 5"><path d="M0 0 H7 L3.5 5Z" fill="#fff"/></svg>
<div class="cell" style="left:320px;width:84px;top:306.5px;color:#222;letter-spacing:-0.25px;">GLN-005</div>
<div class="cell" style="left:404px;width:130px;top:286.5px;color:#222;">深圳市乐能创新技术有<br>限公司<br>SZLNITCL</div>
<div class="cell" style="left:534px;width:84px;top:306.5px;color:#222;">线下采购</div>
<div class="cell" style="left:618px;width:84px;top:306.5px;color:#222;">邓丽坪</div>
<div class="cell" style="left:702px;width:84px;top:296.5px;color:#222;">亚马逊市场二<br>部</div>
<div class="cell" style="left:786px;width:60px;top:306.5px;color:#222;">黄升权</div>
<div class="cell" style="left:846px;width:60px;top:306.5px;color:#222;">黄升权</div>
<div class="cell" style="left:906px;width:130px;top:306.5px;color:#222;letter-spacing:-0.25px;">2024-03-04 10:51:46</div>
<div class="cell" style="left:1036px;width:130px;top:306.5px;color:#222;letter-spacing:-0.25px;">2024-03-04 10:51:46</div>
<div class="cell" style="left:1166px;width:60px;top:306.5px;color:#222;">已作废</div>
<div class="cell" style="left:1226px;width:60px;top:306.5px;color:#222;">待审批</div>
<div class="cell" style="left:1286px;width:100px;top:306.5px;color:#222;"></div>
<div class="cell" style="left:1386px;width:130px;top:306.5px;color:#222;"></div>
<div class="cell" style="left:1519px;width:130px;top:306.5px;color:#409eff;">查看</div>
<div class="hl" style="left:0;top:346px;width:1647px;height:1px;background:#dfe5ee"></div>
<div class="cb" style="left:9px;top:369.5px"></div>
<div class="cell" style="left:30px;width:40px;top:367.5px;color:#222;letter-spacing:-0.25px;">8</div>
<div class="cell" style="left:70px;width:140px;top:367.5px;color:#222;letter-spacing:-0.25px;">PCQ2402290011</div>
<div class="cell" style="left:210px;width:110px;top:364.5px;color:#409eff;letter-spacing:-0.25px;">PO2402290114</div>
<div class="abs" style="left:221px;top:382.5px;width:45px;height:7px;background:#b1d8fb"></div>
<div class="abs" style="left:266px;top:382.5px;width:45px;height:7px;background:#ffe4a3"></div>
<svg class="abs" style="left:240px;top:383.5px" width="7" height="5" viewBox="0 0 7 5"><path d="M3.5 0 L7 5 H0Z" fill="#fff"/></svg>
<svg class="abs" style="left:285px;top:383.5px" width="7" height="5" viewBox="0 0 7 5"><path d="M0 0 H7 L3.5 5Z" fill="#fff"/></svg>
<div class="cell" style="left:320px;width:84px;top:367.5px;color:#222;letter-spacing:-0.25px;">GLN-005</div>
<div class="cell" style="left:404px;width:130px;top:347.5px;color:#222;">深圳市乐能创新技术有<br>限公司<br>SZLNITCL</div>
<div class="cell" style="left:534px;width:84px;top:367.5px;color:#222;">线下采购</div>
<div class="cell" style="left:618px;width:84px;top:367.5px;color:#222;">向莉娜</div>
<div class="cell" style="left:702px;width:84px;top:357.5px;color:#222;">多平台市场二<br>部</div>
<div class="cell" style="left:786px;width:60px;top:367.5px;color:#222;">黄升权</div>
<div class="cell" style="left:846px;width:60px;top:367.5px;color:#222;">管理员</div>
<div class="cell" style="left:906px;width:130px;top:367.5px;color:#222;letter-spacing:-0.25px;">2024-02-29 17:58:59</div>
<div class="cell" style="left:1036px;width:130px;top:367.5px;color:#222;letter-spacing:-0.25px;">2024-02-29 17:58:59</div>
<div class="cell" style="left:1166px;width:60px;top:367.5px;color:#222;">待执行</div>
<div class="cell" style="left:1226px;width:60px;top:367.5px;color:#409eff;">终止</div>
<div class="cell" style="left:1286px;width:100px;top:367.5px;color:#222;"></div>
<div class="cell" style="left:1386px;width:130px;top:367.5px;color:#222;"></div>
<div class="cell" style="left:1519px;width:130px;top:367.5px;color:#409eff;">查看&nbsp;&nbsp;作废</div>
<div class="hl" style="left:0;top:407px;width:1647px;height:1px;background:#dfe5ee"></div>
<div class="hl" style="left:0px;top:0;width:1px;height:379px;background:#dfe5ee"></div>
<div class="hl" style="left:30px;top:0;width:1px;height:379px;background:#dfe5ee"></div>
<div class="hl" style="left:70px;top:0;width:1px;height:379px;background:#dfe5ee"></div>
<div class="hl" style="left:210px;top:0;width:1px;height:379px;background:#dfe5ee"></div>
<div class="hl" style="left:320px;top:0;width:1px;height:379px;background:#dfe5ee"></div>
<div class="hl" style="left:404px;top:0;width:1px;height:379px;background:#dfe5ee"></div>
<div class="hl" style="left:534px;top:0;width:1px;height:379px;background:#dfe5ee"></div>
<div class="hl" style="left:618px;top:0;width:1px;height:379px;background:#dfe5ee"></div>
<div class="hl" style="left:702px;top:0;width:1px;height:379px;background:#dfe5ee"></div>
<div class="hl" style="left:786px;top:0;width:1px;height:379px;background:#dfe5ee"></div>
<div class="hl" style="left:846px;top:0;width:1px;height:379px;background:#dfe5ee"></div>
<div class="hl" style="left:906px;top:0;width:1px;height:379px;background:#dfe5ee"></div>
<div class="hl" style="left:1036px;top:0;width:1px;height:379px;background:#dfe5ee"></div>
<div class="hl" style="left:1166px;top:0;width:1px;height:379px;background:#dfe5ee"></div>
<div class="hl" style="left:1226px;top:0;width:1px;height:379px;background:#dfe5ee"></div>
<div class="hl" style="left:1286px;top:0;width:1px;height:379px;background:#dfe5ee"></div>
<div class="hl" style="left:1386px;top:0;width:1px;height:379px;background:#dfe5ee"></div>
<div class="hl" style="left:1516px;top:0;width:1px;height:379px;background:#dfe5ee"></div>
<div class="hl" style="left:1646px;top:0;width:1px;height:379px;background:#dfe5ee"></div>
<div class="abs" style="left:0;top:0;width:1661px;height:42px;background:#fff;border-top:1px solid #dfe5ee;border-bottom:1px solid #dfe5ee"></div>
<div class="hl" style="left:0px;top:0;width:1px;height:42px;background:#dfe5ee"></div>
<div class="hl" style="left:30px;top:0;width:1px;height:42px;background:#dfe5ee"></div>
<div class="hl" style="left:70px;top:0;width:1px;height:42px;background:#dfe5ee"></div>
<div class="hl" style="left:210px;top:0;width:1px;height:42px;background:#dfe5ee"></div>
<div class="hl" style="left:320px;top:0;width:1px;height:42px;background:#dfe5ee"></div>
<div class="hl" style="left:404px;top:0;width:1px;height:42px;background:#dfe5ee"></div>
<div class="hl" style="left:534px;top:0;width:1px;height:42px;background:#dfe5ee"></div>
<div class="hl" style="left:618px;top:0;width:1px;height:42px;background:#dfe5ee"></div>
<div class="hl" style="left:702px;top:0;width:1px;height:42px;background:#dfe5ee"></div>
<div class="hl" style="left:786px;top:0;width:1px;height:42px;background:#dfe5ee"></div>
<div class="hl" style="left:846px;top:0;width:1px;height:42px;background:#dfe5ee"></div>
<div class="hl" style="left:906px;top:0;width:1px;height:42px;background:#dfe5ee"></div>
<div class="hl" style="left:1036px;top:0;width:1px;height:42px;background:#dfe5ee"></div>
<div class="hl" style="left:1166px;top:0;width:1px;height:42px;background:#dfe5ee"></div>
<div class="hl" style="left:1226px;top:0;width:1px;height:42px;background:#dfe5ee"></div>
<div class="hl" style="left:1286px;top:0;width:1px;height:42px;background:#dfe5ee"></div>
<div class="hl" style="left:1386px;top:0;width:1px;height:42px;background:#dfe5ee"></div>
<div class="hl" style="left:1516px;top:0;width:1px;height:42px;background:#dfe5ee"></div>
<div class="hl" style="left:1646px;top:0;width:1px;height:42px;background:#dfe5ee"></div>
<div class="hc" style="left:30px;width:40px;top:10.5px">NO.</div>
<div class="hc" style="left:70px;width:140px;top:10.5px">采购订单变更申请编码</div>
<div class="hc" style="left:210px;width:110px;top:10.5px">采购订单编码</div>
<div class="hc" style="left:320px;width:84px;top:10.5px">供应商编码</div>
<div class="hc" style="left:404px;width:130px;top:10.5px">公司主体</div>
<div class="hc" style="left:534px;width:84px;top:10.5px">采购类型</div>
<div class="hc" style="left:618px;width:84px;top:10.5px">运营专员</div>
<div class="hc" style="left:702px;width:84px;top:10.5px">销售部门</div>
<div class="hc" style="left:786px;width:60px;top:10.5px">采购员</div>
<div class="hc" style="left:846px;width:60px;top:10.5px">创建人</div>
<div class="hc" style="left:906px;width:130px;top:10.5px">创建时间</div>
<div class="hc" style="left:1036px;width:130px;top:10.5px">修改时间</div>
<div class="hc" style="left:1166px;width:60px;top:0.5px">变更申请<br>状态</div>
<div class="hc" style="left:1226px;width:60px;top:0.5px">变更申请<br>审批状态</div>
<div class="hc" style="left:1286px;width:100px;top:10.5px">执行人</div>
<div class="hc" style="left:1386px;width:130px;top:10.5px">执行时间</div>
<div class="hc" style="left:1516px;width:130px;top:10.5px">操作</div>
<div class="cb" style="left:9px;top:13.5px"></div>
<div class="abs" style="left:1654px;top:127px;width:7px;height:252px;background:#c1c1c1;border-radius:3px 3px 0 0"></div>
</div>
<div class="abs" style="left:758px;top:20px;width:380px;height:48px;background:#e7f8ee;border:1px solid #c6eed6;border-radius:4px;z-index:10">
<svg class="abs" style="left:21px;top:15px" width="15" height="15" viewBox="0 0 15 15"><circle cx="7.5" cy="7.5" r="7.5" fill="#2fbf62"/><path d="M4.2 7.6 L6.6 9.9 L10.8 5.4" stroke="#fff" stroke-width="1.6" fill="none"/></svg>
<div class="abs" style="left:46px;top:13px;font-size:14px;line-height:20px;color:#3bbd68;white-space:nowrap">操作成功</div>
<svg class="abs" style="left:349px;top:17px" width="12" height="12" viewBox="0 0 12 12"><path d="M1 1 L11 11 M11 1 L1 11" stroke="#b5b9c0" stroke-width="1.2"/></svg>
</div>
</div>
</body></html>
